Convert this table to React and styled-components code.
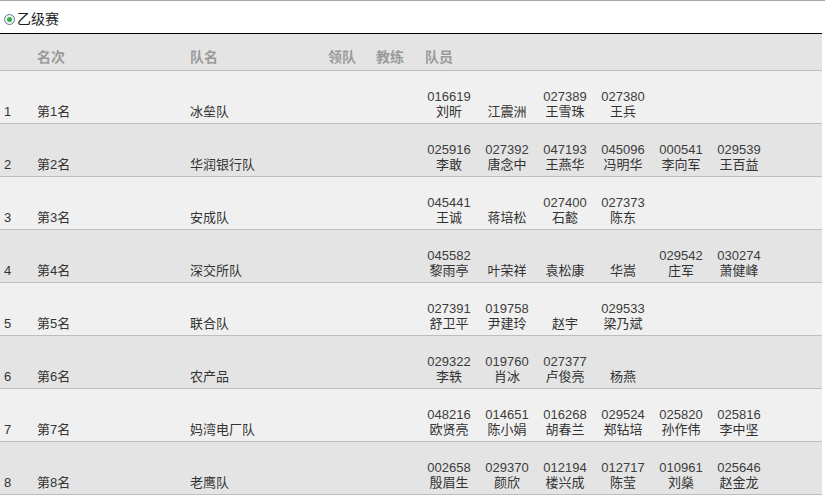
import React from "react";
import styled, { createGlobalStyle } from "styled-components";

const Global = createGlobalStyle`
  html, body { margin: 0; padding: 0; background: #fff; }
  body { font-family: "Liberation Sans", "Noto Sans CJK SC", sans-serif; color: #333; }
`;

const Page = styled.div`
  width: 825px;
  border-top: 1px solid #a8a8a8;
`;

const TitleBar = styled.div`
  height: 32px;
  display: flex;
  align-items: center;
  padding: 4px 0 0 4px;
  box-sizing: border-box;
  font-size: 14px;
  line-height: 16px;
  color: #222;
`;

const Radio = styled.span`
  width: 11px;
  height: 11px;
  box-sizing: border-box;
  border-radius: 50%;
  border: 1px solid #5a7a96;
  background: #f4f4f4;
  display: inline-flex;
  align-items: center;
  justify-content: center;
  margin-right: 2px;
  &::after {
    content: "";
    width: 5px;
    height: 5px;
    border-radius: 50%;
    background: #2fb24a;
  }
`;

const Table = styled.div`
  width: 822px;
  border-top: 1px solid #000;
`;

const cols = "37px 153px 138px 48px 44px repeat(6, 58px) 54px";

const HeadRow = styled.div`
  display: grid;
  grid-template-columns: ${cols};
  height: 36px;
  align-items: end;
  background: #e4e4e4;
  border-bottom: 1px solid #bdbdbd;
  padding-bottom: 5px;
  box-sizing: border-box;
  height: 37px;
`;

const HeadCell = styled.div`
  font-size: 14px;
  font-weight: bold;
  line-height: 16px;
  color: #9a9a9a;
  white-space: nowrap;
  padding-left: ${(p) => p.$pad || 0}px;
`;

const Row = styled.div`
  display: grid;
  grid-template-columns: ${cols};
  height: 53px;
  box-sizing: border-box;
  align-items: end;
  padding-bottom: 4px;
  background: ${(p) => (p.$odd ? "#f0f0f0" : "#e4e4e4")};
  border-bottom: 1px solid #bdbdbd;
`;

const Cell = styled.div`
  font-size: 13px;
  line-height: 15px;
  color: #333;
  white-space: nowrap;
  padding-left: ${(p) => p.$pad || 0}px;
`;

const Member = styled.div`
  display: flex;
  flex-direction: column;
  align-items: center;
  font-size: 13px;
  line-height: 15px;
  color: #333;
  white-space: nowrap;
`;

const Num = styled.span`
  color: #3c3c3c;
  min-height: 15px;
`;

const data = [
  ["第1名", "冰垒队", [["016619", "刘昕"], ["", "江震洲"], ["027389", "王雪珠"], ["027380", "王兵"]]],
  ["第2名", "华润银行队", [["025916", "李敢"], ["027392", "唐念中"], ["047193", "王燕华"], ["045096", "冯明华"], ["000541", "李向军"], ["029539", "王百益"]]],
  ["第3名", "安成队", [["045441", "王诚"], ["", "蒋培松"], ["027400", "石懿"], ["027373", "陈东"]]],
  ["第4名", "深交所队", [["045582", "黎雨亭"], ["", "叶荣祥"], ["", "袁松康"], ["", "华嵩"], ["029542", "庄军"], ["030274", "萧健峰"]]],
  ["第5名", "联合队", [["027391", "舒卫平"], ["019758", "尹建玲"], ["", "赵宇"], ["029533", "梁乃斌"]]],
  ["第6名", "农产品", [["029322", "李轶"], ["019760", "肖冰"], ["027377", "卢俊亮"], ["", "杨燕"]]],
  ["第7名", "妈湾电厂队", [["048216", "欧贤亮"], ["014651", "陈小娟"], ["016268", "胡春兰"], ["029524", "郑钻培"], ["025820", "孙作伟"], ["025816", "李中坚"]]],
  ["第8名", "老鹰队", [["002658", "殷眉生"], ["029370", "颜欣"], ["012194", "楼兴成"], ["012717", "陈莹"], ["010961", "刘燊"], ["025646", "赵金龙"]]],
];

export default function App() {
  return (
    <Page>
      <Global />
      <TitleBar>
        <Radio />
        乙级赛
      </TitleBar>
      <Table>
        <HeadRow>
          <HeadCell />
          <HeadCell>名次</HeadCell>
          <HeadCell>队名</HeadCell>
          <HeadCell>领队</HeadCell>
          <HeadCell>教练</HeadCell>
          <HeadCell $pad={5}>队员</HeadCell>
        </HeadRow>
        {data.map(([rank, team, members], i) => (
          <Row key={i} $odd={i % 2 === 0}>
            <Cell $pad={4}>{i + 1}</Cell>
            <Cell>{rank}</Cell>
            <Cell>{team}</Cell>
            <Cell />
            <Cell />
            {members.map(([n, name], j) => (
              <Member key={j}>
                <Num>{n}</Num>
                <span>{name}</span>
              </Member>
            ))}
          </Row>
        ))}
      </Table>
    </Page>
  );
}
